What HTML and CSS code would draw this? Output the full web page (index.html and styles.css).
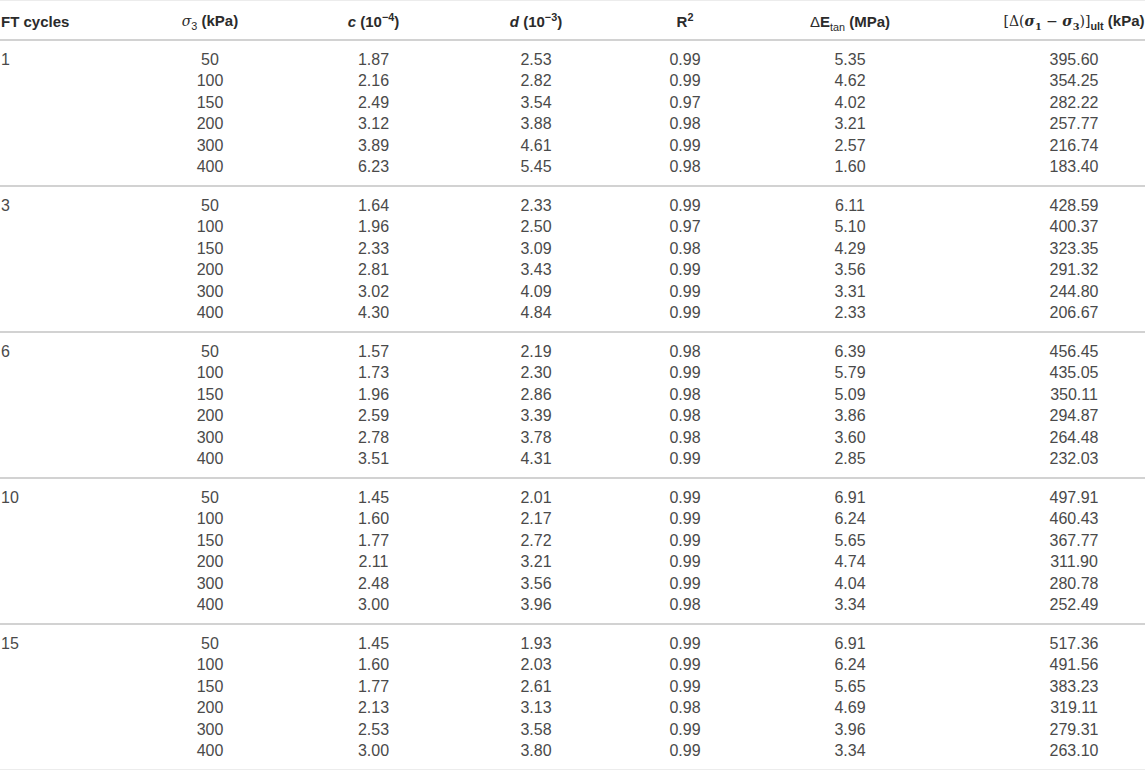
FILE: index.html
```html
<!DOCTYPE html>
<html lang="en">
<head>
<meta charset="utf-8">
<title>FT cycles table</title>
<link rel="stylesheet" href="styles.css">
</head>
<body>
<table class="data-table">
  <colgroup>
    <col class="w1"><col class="w2"><col class="w3"><col class="w4"><col class="w5"><col class="w6"><col class="w7">
  </colgroup>
  <thead>
    <tr>
      <th class="c1">FT cycles</th>
      <th class="c2"><span class="math-i">σ</span><sub class="sub-n">3</sub> (kPa)</th>
      <th class="c3"><i>c</i> (10<sup>−4</sup>)</th>
      <th class="c4"><i>d</i> (10<sup>−3</sup>)</th>
      <th class="c5">R<sup>2</sup></th>
      <th class="c6"><span class="reg">Δ</span>E<sub class="sub-n">tan</sub> (MPa)</th>
      <th class="c7"><span class="math">[Δ(<b class="math-bi">σ</b><sub class="sub-m">1</sub> − <b class="math-bi">σ</b><sub class="sub-m">3</sub>)]</span><sub class="sub-b">ult</sub> (kPa)</th>
    </tr>
  </thead>
  <tbody class="group">
    <tr><td class="c1">1</td><td class="c2">50</td><td class="c3">1.87</td><td class="c4">2.53</td><td class="c5">0.99</td><td class="c6">5.35</td><td class="c7">395.60</td></tr>
    <tr><td class="c1"></td><td class="c2">100</td><td class="c3">2.16</td><td class="c4">2.82</td><td class="c5">0.99</td><td class="c6">4.62</td><td class="c7">354.25</td></tr>
    <tr><td class="c1"></td><td class="c2">150</td><td class="c3">2.49</td><td class="c4">3.54</td><td class="c5">0.97</td><td class="c6">4.02</td><td class="c7">282.22</td></tr>
    <tr><td class="c1"></td><td class="c2">200</td><td class="c3">3.12</td><td class="c4">3.88</td><td class="c5">0.98</td><td class="c6">3.21</td><td class="c7">257.77</td></tr>
    <tr><td class="c1"></td><td class="c2">300</td><td class="c3">3.89</td><td class="c4">4.61</td><td class="c5">0.99</td><td class="c6">2.57</td><td class="c7">216.74</td></tr>
    <tr><td class="c1"></td><td class="c2">400</td><td class="c3">6.23</td><td class="c4">5.45</td><td class="c5">0.98</td><td class="c6">1.60</td><td class="c7">183.40</td></tr>
  </tbody>
  <tbody class="group">
    <tr><td class="c1">3</td><td class="c2">50</td><td class="c3">1.64</td><td class="c4">2.33</td><td class="c5">0.99</td><td class="c6">6.11</td><td class="c7">428.59</td></tr>
    <tr><td class="c1"></td><td class="c2">100</td><td class="c3">1.96</td><td class="c4">2.50</td><td class="c5">0.97</td><td class="c6">5.10</td><td class="c7">400.37</td></tr>
    <tr><td class="c1"></td><td class="c2">150</td><td class="c3">2.33</td><td class="c4">3.09</td><td class="c5">0.98</td><td class="c6">4.29</td><td class="c7">323.35</td></tr>
    <tr><td class="c1"></td><td class="c2">200</td><td class="c3">2.81</td><td class="c4">3.43</td><td class="c5">0.99</td><td class="c6">3.56</td><td class="c7">291.32</td></tr>
    <tr><td class="c1"></td><td class="c2">300</td><td class="c3">3.02</td><td class="c4">4.09</td><td class="c5">0.99</td><td class="c6">3.31</td><td class="c7">244.80</td></tr>
    <tr><td class="c1"></td><td class="c2">400</td><td class="c3">4.30</td><td class="c4">4.84</td><td class="c5">0.99</td><td class="c6">2.33</td><td class="c7">206.67</td></tr>
  </tbody>
  <tbody class="group">
    <tr><td class="c1">6</td><td class="c2">50</td><td class="c3">1.57</td><td class="c4">2.19</td><td class="c5">0.98</td><td class="c6">6.39</td><td class="c7">456.45</td></tr>
    <tr><td class="c1"></td><td class="c2">100</td><td class="c3">1.73</td><td class="c4">2.30</td><td class="c5">0.99</td><td class="c6">5.79</td><td class="c7">435.05</td></tr>
    <tr><td class="c1"></td><td class="c2">150</td><td class="c3">1.96</td><td class="c4">2.86</td><td class="c5">0.98</td><td class="c6">5.09</td><td class="c7">350.11</td></tr>
    <tr><td class="c1"></td><td class="c2">200</td><td class="c3">2.59</td><td class="c4">3.39</td><td class="c5">0.98</td><td class="c6">3.86</td><td class="c7">294.87</td></tr>
    <tr><td class="c1"></td><td class="c2">300</td><td class="c3">2.78</td><td class="c4">3.78</td><td class="c5">0.98</td><td class="c6">3.60</td><td class="c7">264.48</td></tr>
    <tr><td class="c1"></td><td class="c2">400</td><td class="c3">3.51</td><td class="c4">4.31</td><td class="c5">0.99</td><td class="c6">2.85</td><td class="c7">232.03</td></tr>
  </tbody>
  <tbody class="group">
    <tr><td class="c1">10</td><td class="c2">50</td><td class="c3">1.45</td><td class="c4">2.01</td><td class="c5">0.99</td><td class="c6">6.91</td><td class="c7">497.91</td></tr>
    <tr><td class="c1"></td><td class="c2">100</td><td class="c3">1.60</td><td class="c4">2.17</td><td class="c5">0.99</td><td class="c6">6.24</td><td class="c7">460.43</td></tr>
    <tr><td class="c1"></td><td class="c2">150</td><td class="c3">1.77</td><td class="c4">2.72</td><td class="c5">0.99</td><td class="c6">5.65</td><td class="c7">367.77</td></tr>
    <tr><td class="c1"></td><td class="c2">200</td><td class="c3">2.11</td><td class="c4">3.21</td><td class="c5">0.99</td><td class="c6">4.74</td><td class="c7">311.90</td></tr>
    <tr><td class="c1"></td><td class="c2">300</td><td class="c3">2.48</td><td class="c4">3.56</td><td class="c5">0.99</td><td class="c6">4.04</td><td class="c7">280.78</td></tr>
    <tr><td class="c1"></td><td class="c2">400</td><td class="c3">3.00</td><td class="c4">3.96</td><td class="c5">0.98</td><td class="c6">3.34</td><td class="c7">252.49</td></tr>
  </tbody>
  <tbody class="group last">
    <tr><td class="c1">15</td><td class="c2">50</td><td class="c3">1.45</td><td class="c4">1.93</td><td class="c5">0.99</td><td class="c6">6.91</td><td class="c7">517.36</td></tr>
    <tr><td class="c1"></td><td class="c2">100</td><td class="c3">1.60</td><td class="c4">2.03</td><td class="c5">0.99</td><td class="c6">6.24</td><td class="c7">491.56</td></tr>
    <tr><td class="c1"></td><td class="c2">150</td><td class="c3">1.77</td><td class="c4">2.61</td><td class="c5">0.99</td><td class="c6">5.65</td><td class="c7">383.23</td></tr>
    <tr><td class="c1"></td><td class="c2">200</td><td class="c3">2.13</td><td class="c4">3.13</td><td class="c5">0.98</td><td class="c6">4.69</td><td class="c7">319.11</td></tr>
    <tr><td class="c1"></td><td class="c2">300</td><td class="c3">2.53</td><td class="c4">3.58</td><td class="c5">0.99</td><td class="c6">3.96</td><td class="c7">279.31</td></tr>
    <tr><td class="c1"></td><td class="c2">400</td><td class="c3">3.00</td><td class="c4">3.80</td><td class="c5">0.99</td><td class="c6">3.34</td><td class="c7">263.10</td></tr>
  </tbody>
</table>
</body>
</html>
```

FILE: styles.css
```css
html, body {
  margin: 0;
  padding: 0;
  background: #ffffff;
}

.data-table {
  width: 1145px;
  table-layout: fixed;
  border-collapse: collapse;
  font-family: "Liberation Sans", Arial, sans-serif;
  font-size: 16px;
  color: #4a4a4a;
  border-top: 1px solid #ececec;
}

.w1 { width: 128px; }
.w2 { width: 164px; }
.w3 { width: 163px; }
.w4 { width: 156px; }
.w5 { width: 157px; }
.w6 { width: 195px; }
.w7 { width: 182px; }

.data-table th,
.data-table td {
  padding: 0;
  text-align: center;
  white-space: nowrap;
}

.data-table th {
  font-size: 15px;
  font-weight: bold;
  color: #2b2b2b;
  line-height: 19px;
  padding-top: 10px;
  padding-bottom: 8px;
  border-bottom: 2px solid #d2d2d2;
}

.data-table td {
  line-height: 21.5px;
  height: 21.5px;
}

.data-table .c1 { text-align: left; padding-left: 1px; }
.data-table .c4 { padding-left: 6px; }
.data-table .c5 { padding-right: 9px; }
.data-table .c6 { padding-right: 31px; }
.data-table .c7 { padding-left: 40px; }

.group { border-bottom: 2px solid #d2d2d2; }
.group.last { border-bottom: 1px solid #ececec; }

.group tr:first-child td { padding-top: 7.5px; }
.group tr:last-child td { padding-bottom: 7.5px; }

sub, sup {
  font-size: 0.72em;
  line-height: 0;
}

.math-i {
  font-family: "DejaVu Serif", "Liberation Serif", serif;
  font-style: italic;
  font-weight: normal;
  font-size: 14px;
}

.sub-n { font-weight: normal; }

.reg { font-weight: normal; }

.math {
  font-family: "DejaVu Serif", "Liberation Serif", serif;
  font-weight: normal;
  font-size: 14px;
}

.math-bi {
  font-style: italic;
  font-weight: bold;
}

.sub-m { font-weight: bold; font-size: 0.7em; }
.sub-b { font-weight: bold; }
```
